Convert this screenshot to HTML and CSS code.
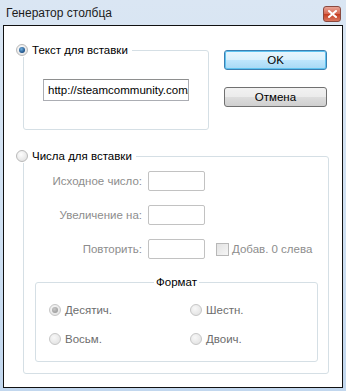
FILE: index.html
```html
<!DOCTYPE html>
<html lang="ru">
<head>
    <meta charset="UTF-8">
    <title>Генератор столбца</title>
    <link rel="stylesheet" href="styles.css">
</head>
<body>
    <div class="window">
        <div class="titlebar">
            <span class="title">Генератор столбца</span>
            <span class="close-btn">
                <svg width="9" height="8" viewBox="0 0 9 8">
                    <path d="M1 1 L8 7 M8 1 L1 7" stroke="#fff" stroke-width="2" stroke-linecap="square"/>
                </svg>
            </span>
        </div>
        <div class="client">
            <div class="top-row">
                <div class="group text-group">
                    <div class="group-title">
                        <span class="radio checked"></span>
                        <span>Текст для вставки</span>
                    </div>
                    <div class="url-input">http://steamcommunity.com/</div>
                </div>
                <div class="buttons">
                    <div class="btn btn-default">OK</div>
                    <div class="btn">Отмена</div>
                </div>
            </div>

            <div class="group numbers-group">
                <div class="group-title">
                    <span class="radio"></span>
                    <span>Числа для вставки</span>
                </div>
                <div class="fields">
                    <span class="field-label">Исходное число:</span>
                    <span class="num-input"></span>
                    <span></span>
                    <span class="field-label">Увеличение на:</span>
                    <span class="num-input"></span>
                    <span></span>
                    <span class="field-label">Повторить:</span>
                    <span class="num-input"></span>
                    <span class="check-row"><span class="checkbox"></span>Добав. 0 слева</span>
                </div>

                <div class="format-group">
                    <div class="format-title">Формат</div>
                    <div class="format-options">
                        <span class="option"><span class="radio disabled checked"></span>Десятич.</span>
                        <span class="option"><span class="radio disabled"></span>Шестн.</span>
                        <span class="option"><span class="radio disabled"></span>Восьм.</span>
                        <span class="option"><span class="radio disabled"></span>Двоич.</span>
                    </div>
                </div>
            </div>
        </div>
    </div>
</body>
</html>
```

FILE: styles.css
```css
body {
    margin: 0;
    padding: 0;
    font-family: "Liberation Sans", Arial, sans-serif;
    font-size: 11px;
    background-color: #fff;
}

.window {
    width: 346px;
    height: 391px;
    background: linear-gradient(to bottom, #dae6f3, #cfe0f2 60%, #c2d7ee);
    box-sizing: border-box;
}

.titlebar {
    height: 25px;
    display: flex;
    align-items: center;
    justify-content: space-between;
    padding: 0 5px 0 6px;
    box-sizing: border-box;
}

.title {
    font-size: 12px;
    color: #1b1b1b;
    margin-top: 1px;
}

.close-btn {
    width: 16px;
    height: 14px;
    border: 1px solid #8a4a40;
    border-radius: 3px;
    background: linear-gradient(to bottom, #e8a496, #d7664f 50%, #c43c20 51%, #d9775f);
    display: flex;
    align-items: center;
    justify-content: center;
    margin-top: 2px;
}

.client {
    margin: 0 3px;
    height: 363px;
    border: 1px solid #111;
    background-color: #fff;
    box-sizing: border-box;
    padding: 24px 0 0 19px;
}

.top-row {
    display: flex;
    align-items: flex-start;
}

.group {
    border: 1px solid #d5dfe5;
    border-radius: 3px;
    box-sizing: border-box;
}

.group-title {
    display: flex;
    width: fit-content;
    align-items: center;
    gap: 4px;
    height: 14px;
    margin: -8px 0 0 -8px;
    padding-right: 4px;
    background-color: #fff;
    color: #000;
    font-size: 11.5px;
}

.text-group {
    width: 186px;
    height: 80px;
}

.url-input {
    width: 146px;
    height: 22px;
    margin: 22px 0 0 19px;
    border: 1px solid #abadb3;
    border-top-color: #8e8f8f;
    box-sizing: border-box;
    padding: 0 0 0 4px;
    font-size: 11.5px;
    line-height: 20px;
    color: #000;
    white-space: nowrap;
    overflow: hidden;
}

.buttons {
    display: flex;
    flex-direction: column;
    gap: 17px;
    margin-left: 15px;
}

.btn {
    width: 103px;
    height: 20px;
    box-sizing: border-box;
    border: 1px solid #707070;
    border-radius: 3px;
    background: linear-gradient(to bottom, #f2f2f2, #ebebeb 50%, #dddddd 51%, #cfcfcf);
    display: flex;
    align-items: center;
    justify-content: center;
    font-size: 11.5px;
    color: #000;
}

.btn-default {
    border-color: #3c7fb1;
    background: linear-gradient(to bottom, #eaf6fd, #d9f0fc 50%, #bee6fd 51%, #a7d9f5);
    box-shadow: inset 0 0 0 1px #5fc3f0;
}

.numbers-group {
    width: 306px;
    height: 218px;
    margin-top: 26px;
}

.fields {
    display: grid;
    grid-template-columns: 118px 57px auto;
    column-gap: 6px;
    row-gap: 14px;
    margin-top: 8px;
}

.field-label {
    color: #8d8d8d;
    text-align: right;
    line-height: 20px;
    font-size: 11.5px;
}

.num-input {
    height: 20px;
    border: 1px solid #c2c2c2;
    border-radius: 2px;
    box-sizing: border-box;
}

.check-row {
    display: flex;
    align-items: center;
    gap: 3px;
    margin-left: 5px;
    color: #8d8d8d;
    font-size: 11.5px;
}

.checkbox {
    width: 13px;
    height: 13px;
    box-sizing: border-box;
    border: 1px solid #b8b8b8;
    background: linear-gradient(135deg, #e2e2e2, #f6f6f6);
}

.format-group {
    margin: 23px 10px 0 11px;
    height: 80px;
    border: 1px solid #d5dfe5;
    border-radius: 3px;
    box-sizing: border-box;
    display: flex;
    flex-direction: column;
    align-items: center;
}

.format-title {
    height: 14px;
    margin-top: -8px;
    padding: 0 2px;
    background-color: #fff;
    color: #000;
    font-size: 11.5px;
    line-height: 14px;
}

.format-options {
    align-self: stretch;
    display: grid;
    grid-template-columns: 141px auto;
    row-gap: 15px;
    padding: 14px 0 0 13px;
}

.option {
    display: flex;
    align-items: center;
    gap: 4px;
    height: 14px;
    color: #6d6d6d;
    font-size: 11.5px;
}

.radio {
    width: 12px;
    height: 12px;
    border-radius: 50%;
    box-sizing: border-box;
    border: 1px solid #b9b9b9;
    background: radial-gradient(circle at 40% 35%, #fdfdfd, #dcdcdc);
    display: inline-flex;
    align-items: center;
    justify-content: center;
    flex-shrink: 0;
}

.radio.checked::after {
    content: "";
    width: 6px;
    height: 6px;
    border-radius: 50%;
    background: radial-gradient(circle at 40% 35%, #6fb0e0, #1c4f86 70%, #0d2f55);
}

.radio.disabled {
    border-color: #c6c6c6;
    background: radial-gradient(circle at 40% 35%, #f8f8f8, #dedede);
}

.radio.disabled.checked::after {
    background: radial-gradient(circle at 40% 35%, #c8c8c8, #8f8f8f);
}
```
